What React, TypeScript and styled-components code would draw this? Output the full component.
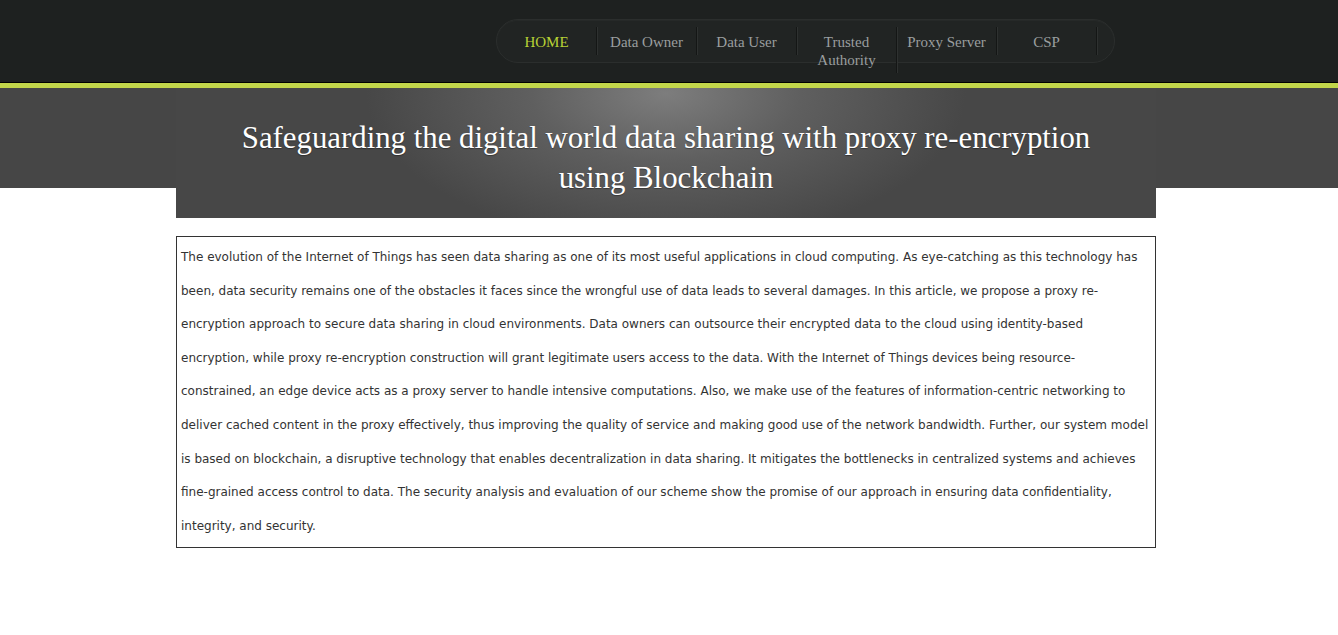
import React from "react";
import styled, { createGlobalStyle } from "styled-components";

const Global = createGlobalStyle`
  html, body { margin: 0; padding: 0; background: #fff; }
  body { font-family: "DejaVu Sans", Verdana, sans-serif; }
`;

const Header = styled.header`
  height: 82px;
  background: #1e2120;
  border-bottom: 1px solid #000;
`;

const Container = styled.div`
  width: 980px;
  margin-left: calc(50% - 493px);
`;

const HeaderInner = styled(Container)`
  padding-top: 19px;
  display: flex;
  justify-content: flex-end;
`;

const Menu = styled.ul`
  list-style: none;
  box-sizing: border-box;
  margin: 0 41px 0 0;
  padding: 7px 18px 0 0;
  height: 44px;
  width: 619px;
  border-radius: 22px;
  background: #212423;
  border: 1px solid #2b2e2d;
  box-shadow: inset 0 1px 0 rgba(255, 255, 255, 0.025);
  display: flex;
  align-items: flex-start;
`;

const MenuItem = styled.li<{ $active?: boolean }>`
  width: 99px;
  flex: none;
  border-right: 1px solid #141615;
  box-shadow: 1px 0 0 #2e3130;
  padding: 6px 0 4px;
  text-align: center;
  font-family: "Liberation Serif", Georgia, serif;
  font-size: 15px;
  line-height: 18px;
  color: ${(p) => (p.$active ? "#b8d235" : "#9a9e9f")};
`;

const Band = styled.div`
  border-top: 5px solid #c2d64a;
  background: linear-gradient(#464646 100px, #fff 100px);
`;

const Hero = styled(Container)`
  height: 130px;
  background: radial-gradient(ellipse 300px 150px at 50% 4%, #7d7d7d 0%, #5f5f5f 45%, #474747 100%);
  display: flex;
  justify-content: center;
  padding-top: 30px;
  box-sizing: border-box;
`;

const Title = styled.h1`
  margin: 0;
  font-family: "Liberation Serif", Georgia, serif;
  font-weight: normal;
  font-size: 30.8px;
  line-height: 40px;
  color: #fff;
  text-align: center;
  width: 880px;
  text-shadow: 0 1px 1px rgba(0, 0, 0, 0.35);
`;

const Content = styled(Container)`
  margin-top: 18px;
`;

const Abstract = styled.p`
  margin: 0;
  border: 1px solid #333;
  padding: 4px;
  font-family: "DejaVu Sans", Verdana, sans-serif;
  font-size: 12px;
  line-height: 33.6px;
  color: #333;
`;

const items = ["HOME", "Data Owner", "Data User", "Trusted Authority", "Proxy Server", "CSP"];

const lines = [
  "The evolution of the Internet of Things has seen data sharing as one of its most useful applications in cloud computing. As eye-catching as this technology has",
  "been, data security remains one of the obstacles it faces since the wrongful use of data leads to several damages. In this article, we propose a proxy re-",
  "encryption approach to secure data sharing in cloud environments. Data owners can outsource their encrypted data to the cloud using identity-based",
  "encryption, while proxy re-encryption construction will grant legitimate users access to the data. With the Internet of Things devices being resource-",
  "constrained, an edge device acts as a proxy server to handle intensive computations. Also, we make use of the features of information-centric networking to",
  "deliver cached content in the proxy effectively, thus improving the quality of service and making good use of the network bandwidth. Further, our system model",
  "is based on blockchain, a disruptive technology that enables decentralization in data sharing. It mitigates the bottlenecks in centralized systems and achieves",
  "fine-grained access control to data. The security analysis and evaluation of our scheme show the promise of our approach in ensuring data confidentiality,",
  "integrity, and security.",
];

export default function App() {
  return (
    <>
      <Global />
      <Header>
        <HeaderInner>
          <Menu>
            {items.map((it, i) => (
              <MenuItem key={it} $active={i === 0}>
                {it}
              </MenuItem>
            ))}
          </Menu>
        </HeaderInner>
      </Header>
      <Band>
        <Hero>
          <Title>Safeguarding the digital world data sharing with proxy re-encryption using Blockchain</Title>
        </Hero>
      </Band>
      <Content>
        <Abstract>
          {lines.map((l, i) => (
            <React.Fragment key={i}>
              {l}
              {i < lines.length - 1 && (l.endsWith("-") ? <br /> : <>{" "}<br /></>)}
            </React.Fragment>
          ))}
        </Abstract>
      </Content>
    </>
  );
}
